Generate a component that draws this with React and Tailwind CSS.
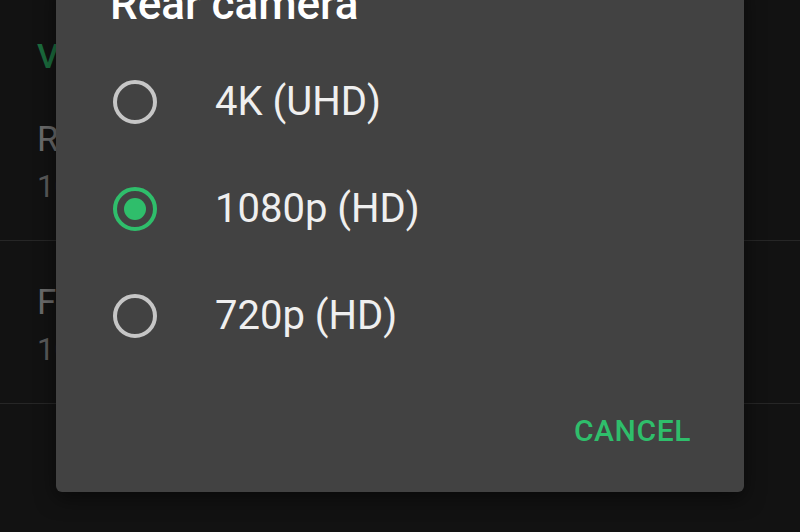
import { useState } from "react";

const options = [
  { id: "4k", label: "4K (UHD)" },
  { id: "1080", label: "1080p (HD)" },
  { id: "720", label: "720p (HD)" },
];

function Radio({ checked }) {
  return (
    <span
      className={
        checked
          ? "flex items-center justify-center w-11 h-11 rounded-full border-4 border-[#2fbe6b] shrink-0"
          : "flex items-center justify-center w-11 h-11 rounded-full border-4 border-[#c6c6c6] shrink-0"
      }
    >
      {checked && <span className="w-[22px] h-[22px] rounded-full bg-[#2fbe6b]" />}
    </span>
  );
}

export default function App() {
  const [selected, setSelected] = useState("1080");

  return (
    <div className="relative h-[532px] w-[800px] overflow-hidden bg-[#121212] font-['Roboto',sans-serif]">
      {/* settings list behind the dialog */}
      <div className="flex flex-col">
        <div className="pl-[37px] pt-[39px] mb-[5px] text-[34px] leading-none font-medium text-[#1b6b3d]">
          Video
        </div>
        <div className="flex flex-col pl-[37px] h-[163px] pt-[44px] border-b border-[#262626]">
          <span className="text-[35px] leading-none text-[#6a6a6a]">Rear camera</span>
          <span className="mt-[14px] text-[31px] leading-none text-[#5a5a5a]">1080p (HD)</span>
        </div>
        <div className="flex flex-col pl-[37px] h-[163px] pt-[44px] border-b border-[#262626]">
          <span className="text-[35px] leading-none text-[#6a6a6a]">Front camera</span>
          <span className="mt-[14px] text-[31px] leading-none text-[#5a5a5a]">1080p (HD)</span>
        </div>
      </div>

      {/* dialog */}
      <div className="absolute left-[56px] top-[-18px] w-[688px] h-[510px] flex flex-col rounded-md bg-[#424242] shadow-[0_6px_20px_rgba(0,0,0,0.5)]">
        <h2 className="pl-[54px] text-[44px] leading-none font-medium text-white">Rear camera</h2>
        <div className="mt-[22px] flex flex-col">
          {options.map((o) => (
            <button
              key={o.id}
              onClick={() => setSelected(o.id)}
              className="flex items-center h-[107px] pl-[57px] text-left"
            >
              <Radio checked={selected === o.id} />
              <span className="ml-[58px] text-[40px] leading-none text-[#efefef]">{o.label}</span>
            </button>
          ))}
        </div>
        <div className="mt-[47px] flex justify-end pr-[53px]">
          <button className="text-[30px] leading-none font-medium tracking-[0.6px] text-[#2fbe6b]">
            CANCEL
          </button>
        </div>
      </div>
    </div>
  );
}
